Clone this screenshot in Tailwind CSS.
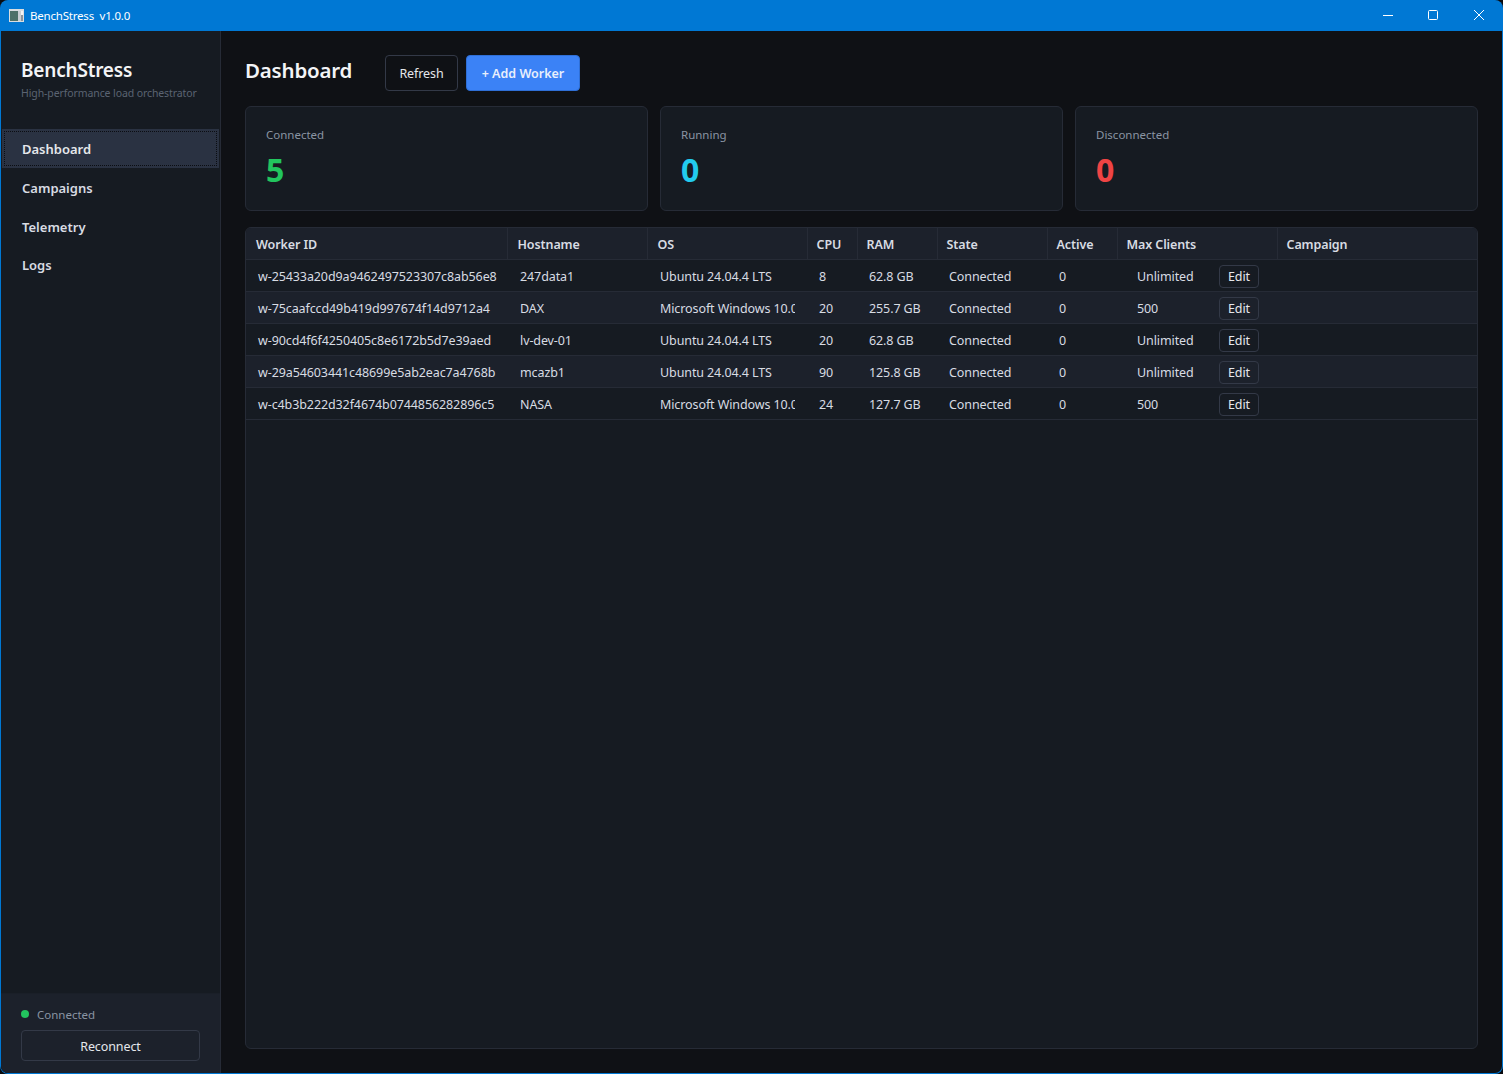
<!DOCTYPE html>
<html lang="en">
<head>
    <meta charset="UTF-8">
    <title>BenchStress</title>
    <script src="https://cdn.jsdelivr.net/npm/@tailwindcss/browser@4"></script>
</head>
<body class="bg-[#0a0b0e] font-['Noto_Sans',sans-serif] text-[13px] text-[#e5e7eb]">
    <div class="w-[1503px] h-[1074px] flex flex-col bg-[#0078d4] rounded-t-[8px] rounded-b-[8px] overflow-hidden">
        <!-- title bar -->
        <div class="h-[31px] shrink-0 flex items-center text-white">
            <svg class="ml-[9px] w-[15px] h-[13px]" viewBox="0 0 15 13">
                <rect width="15" height="13" fill="#d9dde0"/>
                <rect x="1" y="2" width="8" height="10" fill="#4d7168"/>
                <rect x="9" y="2" width="3" height="10" fill="#c9ced2"/>
                <rect x="12" y="2" width="2" height="4" fill="#f2f3f4"/>
                <rect x="12" y="6" width="2" height="6" fill="#8a949c"/>
            </svg>
            <span class="ml-[6px] text-[11.5px] tracking-[-0.2px] leading-none whitespace-pre">BenchStress  v1.0.0</span>
            <div class="ml-auto mr-[1px] flex items-center">
                <svg class="w-[46px] h-[31px]" viewBox="0 0 46 31"><path d="M19 15.5H29" stroke="white" stroke-width="1"/></svg>
                <svg class="w-[46px] h-[31px]" viewBox="0 0 46 31"><rect x="18.5" y="10.5" width="9" height="9" rx="1" fill="none" stroke="white" stroke-width="1"/></svg>
                <svg class="w-[46px] h-[31px]" viewBox="0 0 46 31"><path d="M18 10L28 20M28 10L18 20" stroke="white" stroke-width="1"/></svg>
            </div>
        </div>
        <div class="flex-1 flex min-h-0 mx-[1px] mb-[1px] bg-[#0f1115] rounded-b-[7px] overflow-hidden">
            <!-- sidebar -->
            <aside class="w-[220px] shrink-0 flex flex-col bg-[#161b22] border-r border-[#262b36]">
                <div class="pt-[27px] pl-[20px] h-[98px]">
                    <div class="text-[19px] leading-[24px] font-semibold text-[#f3f4f6] tracking-[-0.2px]">BenchStress</div>
                    <div class="mt-[4px] text-[10.5px] tracking-[-0.1px] leading-[14px] text-[#5b6472]">High-performance load orchestrator</div>
                </div>
                <nav class="flex flex-col">
                    <div class="h-[39px] mx-[1px] p-[2px] bg-[#2a3242] flex">
                        <div class="flex-1 flex items-center pl-[17px] pt-[2px] border border-dotted border-[#0b0d12] font-semibold text-[#e5e7eb]">Dashboard</div>
                    </div>
                    <div class="h-[39px] flex items-center pl-[21px] pt-[2px] font-semibold text-[#d8dce3]">Campaigns</div>
                    <div class="h-[39px] flex items-center pl-[21px] pt-[2px] font-semibold text-[#d8dce3]">Telemetry</div>
                    <div class="h-[38px] flex items-center pl-[21px] pt-[2px] font-semibold text-[#d8dce3]">Logs</div>
                </nav>
                <div class="mt-auto h-[80px] bg-[#1c212b] border-t border-[#1a1f28] px-[20px] pt-[12px]">
                    <div class="flex items-center h-[18px] text-[11.5px] text-[#8a94a3]">
                        <span class="w-[8px] h-[8px] rounded-full bg-[#22c55e] mr-[8px] -mt-[2px]"></span>Connected
                    </div>
                    <button class="mt-[6px] pt-[4px] w-[179px] h-[31px] rounded-[4px] border border-[#333947] text-[#e5e7eb] text-[12.5px] tracking-[-0.1px]">Reconnect</button>
                </div>
            </aside>
            <!-- main -->
            <main class="flex-1 min-w-0 flex flex-col px-[24px] pt-[24px] pb-[24px]">
                <div class="flex items-center h-[36px]">
                    <h1 class="w-[140px] -mt-[6px] text-[20.5px] font-semibold text-[#f3f4f6] tracking-[-0.2px]">Dashboard</h1>
                    <button class="w-[73px] h-[36px] pt-[2px] rounded-[4px] border border-[#333947] text-[12.5px] tracking-[-0.1px] text-[#e5e7eb]">Refresh</button>
                    <button class="ml-[8px] w-[114px] h-[36px] pt-[2px] rounded-[4px] bg-[#3b82f6] border border-[#2f6fd6] text-[12.5px] font-semibold text-[#e8effc]">+ Add Worker</button>
                </div>
                <div class="mt-[15px] grid grid-cols-3 gap-[12px]">
                    <div class="h-[105px] rounded-[6px] border border-[#262b36] bg-[#161b22] pl-[20px] pt-[20px]">
                        <div class="text-[11.5px] leading-[16px] text-[#8a94a3]">Connected</div>
                        <div class="mt-[7px] text-[32px] leading-[40px] font-bold text-[#22c55e]">5</div>
                    </div>
                    <div class="h-[105px] rounded-[6px] border border-[#262b36] bg-[#161b22] pl-[20px] pt-[20px]">
                        <div class="text-[11.5px] leading-[16px] text-[#8a94a3]">Running</div>
                        <div class="mt-[7px] text-[32px] leading-[40px] font-bold text-[#22cbee]">0</div>
                    </div>
                    <div class="h-[105px] rounded-[6px] border border-[#262b36] bg-[#161b22] pl-[20px] pt-[20px]">
                        <div class="text-[11.5px] leading-[16px] text-[#8a94a3]">Disconnected</div>
                        <div class="mt-[7px] text-[32px] leading-[40px] font-bold text-[#ef4444]">0</div>
                    </div>
                </div>
                <div class="mt-[16px] flex-1 rounded-[6px] border border-[#262b36] bg-[#161b22] overflow-hidden">
                    <table class="table-fixed w-[1231px] border-collapse text-left text-[12.5px] tracking-[-0.1px]">
                        <colgroup>
                            <col class="w-[261px]"><col class="w-[140px]"><col class="w-[160px]"><col class="w-[50px]"><col class="w-[80px]"><col class="w-[110px]"><col class="w-[70px]"><col class="w-[160px]"><col class="w-[200px]">
                        </colgroup>
                        <thead>
                            <tr class="h-[31px] bg-[#1c212b] border-b border-[#262b36] text-[#d8dce3]">
                                <th class="pl-[10px] pt-[4px] font-semibold border-r border-[#262b36]">Worker ID</th>
                                <th class="pl-[10px] pt-[4px] font-semibold border-r border-[#262b36]">Hostname</th>
                                <th class="pl-[10px] pt-[4px] font-semibold border-r border-[#262b36]">OS</th>
                                <th class="pl-[9px] pt-[4px] font-semibold border-r border-[#262b36]">CPU</th>
                                <th class="pl-[9px] pt-[4px] font-semibold border-r border-[#262b36]">RAM</th>
                                <th class="pl-[9px] pt-[4px] font-semibold border-r border-[#262b36]">State</th>
                                <th class="pl-[9px] pt-[4px] font-semibold border-r border-[#262b36]">Active</th>
                                <th class="pl-[9px] pt-[4px] font-semibold border-r border-[#262b36]">Max Clients</th>
                                <th class="pl-[9px] pt-[4px] font-semibold">Campaign</th>
                            </tr>
                        </thead>
                        <tbody id="workers" class="text-[#d8dce3]"></tbody>
                    </table>
                </div>
            </main>
        </div>
    </div>

    <script>
        const workers = [
            ['w-25433a20d9a9462497523307c8ab56e8', '247data1', 'Ubuntu 24.04.4 LTS', 8, '62.8 GB', 'Unlimited'],
            ['w-75caafccd49b419d997674f14d9712a4', 'DAX', 'Microsoft Windows 10.0.26100', 20, '255.7 GB', '500'],
            ['w-90cd4f6f4250405c8e6172b5d7e39aed', 'lv-dev-01', 'Ubuntu 24.04.4 LTS', 20, '62.8 GB', 'Unlimited'],
            ['w-29a54603441c48699e5ab2eac7a4768b', 'mcazb1', 'Ubuntu 24.04.4 LTS', 90, '125.8 GB', 'Unlimited'],
            ['w-c4b3b222d32f4674b0744856282896c5', 'NASA', 'Microsoft Windows 10.0.26100', 24, '127.7 GB', '500'],
        ];

        const tbody = document.getElementById('workers');
        workers.forEach((w, i) => {
            const row = document.createElement('tr');
            row.className = i % 2 ? 'h-[32px] border-b border-[#262b36] bg-[#1c212b]' : 'h-[32px] border-b border-[#262b36]';
            row.innerHTML = `
                <td class="pl-[12px] pt-[5px] whitespace-nowrap overflow-hidden">${w[0]}</td>
                <td class="pl-[13px] pt-[5px]">${w[1]}</td>
                <td class="pl-[13px] pr-[12px] pt-[5px]"><div class="whitespace-nowrap overflow-hidden">${w[2]}</div></td>
                <td class="pl-[12px] pt-[5px]">${w[3]}</td>
                <td class="pl-[12px] pt-[5px]">${w[4]}</td>
                <td class="pl-[12px] pt-[5px]">Connected</td>
                <td class="pl-[12px] pt-[5px]">0</td>
                <td class="pl-[20px] pt-[3px]"><div class="flex items-center"><span class="w-[82px] pt-[2px]">${w[5]}</span><button class="w-[40px] h-[23px] pt-[2px] rounded-[4px] border border-[#333947] text-[#e5e7eb]">Edit</button></div></td>
                <td></td>
            `;
            tbody.appendChild(row);
        });
    </script>
</body>
</html>
